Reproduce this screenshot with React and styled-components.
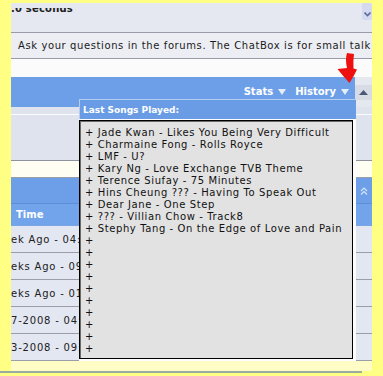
import React from 'react'
import styled, { createGlobalStyle } from 'styled-components'

const Global = createGlobalStyle`
  html, body {
    margin: 0;
    padding: 0;
    background: #ffff84;
    overflow: hidden;
  }
  body {
    font-family: "DejaVu Sans", Verdana, sans-serif;
    font-size: 10px;
    letter-spacing: 0.6px;
  }
`

const Page = styled.div`
  position: relative;
  width: 383px;
  height: 376px;
  padding-top: 3px;
  box-sizing: border-box;
`

const Column = styled.div`
  margin-left: 11px;
  width: 361px;
  display: flex;
  flex-direction: column;
`

const ChatRow = styled.div`
  display: flex;
  height: 29px;
  background: #e5e8f0;
  border-bottom: 1px solid #989ca8;
`

const ChatClip = styled.div`
  flex: 1;
  margin-top: 5px;
  overflow: hidden;
  height: 24px;
`

const ChatText = styled.div`
  margin-top: -5px;
  font-weight: bold;
  font-size: 10px;
  line-height: 12px;
  letter-spacing: 0.2px;
  color: #1c1c22;
`

const ScrollBtn = styled.div`
  width: 10px;
  height: 17px;
  background: #d6daf0;
  border-radius: 2px;
  display: flex;
  align-items: flex-end;
  justify-content: center;
  padding-bottom: 3px;
  box-sizing: border-box;
`

const NoticeRow = styled.div`
  height: 25px;
  display: flex;
  align-items: center;
  padding-left: 7px;
  background: #eceef4;
  border-bottom: 1px solid #989ca8;
  color: #1a1a1a;
  white-space: nowrap;
  overflow: hidden;
`

const BlankRow = styled.div`
  height: 18px;
  background: #fbfbfc;
`

const HeaderRow = styled.div`
  display: flex;
  height: 30px;
`

const HeaderBar = styled.div`
  flex: 1;
  background: #6d9fe8;
  display: flex;
  align-items: flex-start;
  justify-content: flex-end;
  padding: 9px 6px 0 0;
  gap: 4px;
  color: #fff;
  font-weight: bold;
  letter-spacing: 0;
`

const MenuItem = styled.span`
  display: inline-flex;
  align-items: center;
  gap: 5px;
  margin-left: 5px;
`

const SideCol = styled.div`
  width: 17px;
  background: #e6e8ef;
  padding-top: 8px;
  box-sizing: border-box;
`

const ToggleBtn = styled.div`
  height: 15px;
  background: #d6dbe6;
  display: flex;
  align-items: center;
  justify-content: center;
`

const GreyStrip = styled.div`
  height: ${p => p.h}px;
  background: ${p => p.bg};
  border-bottom: 1px solid ${p => p.line};
`

const BlueBar = styled.div`
  height: ${p => p.h}px;
  background: ${p => p.bg};
  border-bottom: 1px solid ${p => p.line};
  display: flex;
  align-items: center;
  justify-content: space-between;
  padding: 0 4px 0 5px;
  color: #fff;
  font-weight: bold;
  letter-spacing: 0;
`

const DataRow = styled.div`
  height: 26px;
  display: flex;
  align-items: center;
  background: #e3e7f1;
  border-bottom: 1px solid #9a9ea8;
  color: #202020;
  letter-spacing: 0.8px;
  white-space: nowrap;
  overflow: hidden;
`

const BottomPad = styled.div`
  height: 10px;
  background: #fffcc6;
`

const BottomLine = styled.div`
  width: 362px;
  height: 2px;
  background: #9aaba0;
`

const Popup = styled.div`
  position: absolute;
  left: 79px;
  top: 99px;
  width: 277px;
  height: 262px;
  background: #fdfdfd;
  display: flex;
  flex-direction: column;
  box-sizing: border-box;
`

const PopTitle = styled.div`
  height: 20px;
  background: #6a9ce6;
  border-top: 1px solid #b4cdf2;
  border-left: 1px solid #b4cdf2;
  box-sizing: border-box;
  color: #fff;
  font-weight: bold;
  font-size: 9px;
  letter-spacing: 0;
  padding: 5px 0 0 3px;
`

const SongBox = styled.div`
  flex: 1;
  margin: 1px 3px 2px 0;
  background: #e2e2e2;
  border: 1px solid #000;
  box-shadow: inset 1px 1px 0 #6a6a6a;
  padding: 6px 5px 0;
  color: #111;
  line-height: 12px;
  white-space: nowrap;
  overflow: hidden;
`

const Arrow = styled.svg`
  position: absolute;
  left: 336px;
  top: 52px;
`

const Tri = ({ up, color, w = 8, h = 6 }) => (
  <svg width={w} height={h} viewBox={`0 0 ${w} ${h}`}>
    <polygon points={up ? `0,${h} ${w / 2},0 ${w},${h}` : `0,0 ${w},0 ${w / 2},${h}`} fill={color} />
  </svg>
)

const songs = [
  'Jade Kwan - Likes You Being Very Difficult',
  'Charmaine Fong - Rolls Royce',
  'LMF - U?',
  'Kary Ng - Love Exchange TVB Theme',
  'Terence Siufay - 75 Minutes',
  'Hins Cheung ??? - Having To Speak Out',
  'Dear Jane - One Step',
  '??? - Villian Chow - Track8',
  'Stephy Tang - On the Edge of Love and Pain',
  '', '', '', '', '', '', '', '', '', ''
]

const rows = ['ek Ago - 04:12 PM', 'eks Ago - 09:40 PM', 'eks Ago - 01:55 AM', '7-2008 - 04:18 PM', '3-2008 - 09:02 AM']

export default function App() {
  return (
    <Page>
      <Global />
      <Column>
        <ChatRow>
          <ChatClip>
            <ChatText>.0 seconds</ChatText>
          </ChatClip>
          <ScrollBtn>
            <svg width="7" height="5" viewBox="0 0 7 5">
              <polyline points="0.5,0.5 3.5,3.5 6.5,0.5" fill="none" stroke="#5f6e9e" strokeWidth="1.6" />
            </svg>
          </ScrollBtn>
        </ChatRow>
        <NoticeRow>Ask your questions in the forums. The ChatBox is for small talk</NoticeRow>
        <BlankRow />
        <HeaderRow>
          <HeaderBar>
            <MenuItem>Stats <Tri color="#e4edfc" /></MenuItem>
            <MenuItem>History <Tri color="#e4edfc" /></MenuItem>
          </HeaderBar>
          <SideCol>
            <ToggleBtn>
              <Tri up color="#4b5878" w={9} h={5} />
            </ToggleBtn>
          </SideCol>
        </HeaderRow>
        <GreyStrip h={7} bg="#dfe3ee" line="#fbfcff" />
        <GreyStrip h={45} bg="#dfe3ee" line="#8e929c" />
        <GreyStrip h={16} bg="#fefef2" line="#9a9ea6" />
        <BlueBar h={25} bg="#6d9fe8" line="#5d8fd8">
          <span />
          <svg width="8" height="8" viewBox="0 0 8 8">
            <polyline points="1,4 4,1 7,4" fill="none" stroke="#d6e4fb" strokeWidth="1.2" />
            <polyline points="1,7.5 4,4.5 7,7.5" fill="none" stroke="#d6e4fb" strokeWidth="1.2" />
          </svg>
        </BlueBar>
        <BlueBar h={21} bg="#72a4ec" line="#7aa6e6">
          <span>Time</span>
        </BlueBar>
        {rows.map((r, i) => (
          <DataRow key={i}>{r}</DataRow>
        ))}
        <BottomPad />
      </Column>
      <BottomLine />

      <Popup>
        <PopTitle>Last Songs Played:</PopTitle>
        <SongBox>
          {songs.map((s, i) => (
            <div key={i}>+ {s}</div>
          ))}
        </SongBox>
      </Popup>

      <Arrow width="22" height="32" viewBox="0 0 22 32">
        <path
          d="M11 1 Q9 7 11 16 L1.5 17 Q7 24 13.5 31 Q18 24 21 17.5 L17.5 16.5 Q17 9 18 2 Z"
          fill="#ee1010"
        />
      </Arrow>
    </Page>
  )
}
